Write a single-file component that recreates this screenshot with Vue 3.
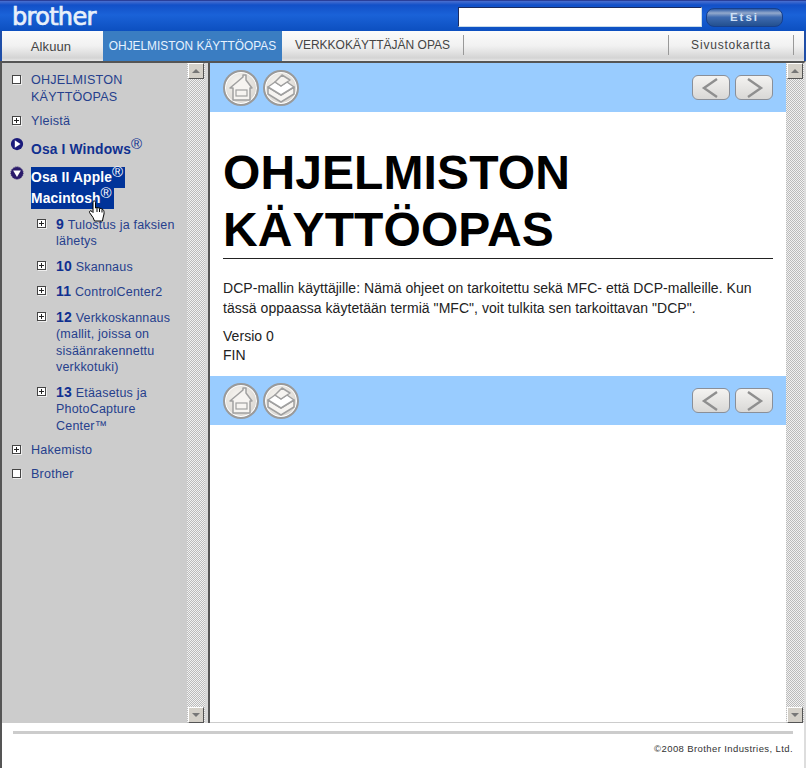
<template>
  <div class="page">
    <header class="topbar">
      <span class="logo">brother</span>
      <div class="search">
        <input class="search-input" type="text" />
        <button class="search-btn">Etsi</button>
      </div>
    </header>

    <nav class="tabs">
      <a class="tab tab-home">Alkuun</a>
      <a class="tab tab-active">OHJELMISTON KÄYTTÖOPAS</a>
      <a class="tab tab-net">VERKKOKÄYTTÄJÄN OPAS</a>
      <span class="tab-fill"></span>
      <a class="tab tab-map">Sivustokartta</a>
      <span class="tab-end"></span>
    </nav>

    <main class="main">
      <aside class="side">
        <ul class="tree">
          <li v-for="item in tree" :key="item.label" class="row" :class="item.cls">
            <span class="marker">
              <span v-if="item.icon === 'box'" class="box"></span>
              <span v-else-if="item.icon === 'plus'" class="box plus"></span>
              <svg v-else-if="item.icon === 'right'" width="16" height="16" viewBox="0 0 16 16">
                <circle cx="8" cy="8" r="7" fill="#1a1a7a" />
                <path d="M5.5 3.8 L12 8 L5.5 12.2 Z" fill="#fff" />
              </svg>
              <svg v-else width="16" height="16" viewBox="0 0 16 16">
                <circle cx="8" cy="8" r="7" fill="#2a1a6a" stroke="#2a1a6a" stroke-dasharray="1.5 1" />
                <path d="M3.6 5 L12.4 5 L8 12.5 Z" fill="#fff" />
              </svg>
            </span>
            <span class="label">
              <template v-if="item.num"><b class="num">{{ item.num }}</b>&nbsp;</template>
              <template v-if="item.selected">
                <span class="sel">Osa II Apple<sup>®</sup></span><br />
                <span class="sel">Macintosh<sup>®</sup></span>
              </template>
              <template v-else>
                <span v-html="item.label"></span>
              </template>
            </span>
          </li>
        </ul>
        <svg class="hand" width="18" height="22" viewBox="0 0 18 22">
          <path d="M5 1.5 C6 .5 7.5 1 7.5 2.5 L7.5 8 L9 7.5 L11 8 L13 8.5 L15 9.5 C16 10.5 16.2 12 16 14 L15 18 L14.5 21 L6.5 21 L5 17.5 L1.5 12.5 C1 11 2.5 10 4 11.5 L5 12.5 Z" fill="#fff" stroke="#000" stroke-width="1" />
          <path d="M9 8 V12 M11.5 8.5 V12 M14 9.5 V12.5" stroke="#000" stroke-width="1" fill="none" />
        </svg>
      </aside>

      <div class="scroll">
        <span class="arrow"><i class="up"></i></span>
        <span class="track"></span>
        <span class="arrow"><i class="down"></i></span>
      </div>

      <div class="split"></div>

      <section class="content">
        <div v-for="pos in ['top', 'bottom']" :key="pos" class="toolbar" :class="pos">
          <div class="round-btns">
            <span class="round">
              <svg width="32" height="32" viewBox="0 0 32 32">
                <path d="M5 16 L18 5 L18 3 L21 3 L21 8 L27 16 L25 16 L25 28 L8 28 L8 16 Z" fill="#f6f4f1" stroke="#a0a0a0" stroke-width="1.5" stroke-linejoin="round" />
                <rect x="11" y="18" width="11" height="6" fill="none" stroke="#a0a0a0" stroke-width="1.2" />
              </svg>
            </span>
            <span class="round">
              <svg width="32" height="32" viewBox="0 0 32 32">
                <path d="M3 15 L16 23 L29 15 L29 22 L16 30 L3 22 Z" fill="#f6f4f1" stroke="#a0a0a0" stroke-width="1.5" stroke-linejoin="round" />
                <path d="M3 15 L10 10 L16 14 L22 10 L29 15 L16 23 Z" fill="#fff" stroke="#a0a0a0" stroke-width="1.5" stroke-linejoin="round" />
                <path d="M10 10 L17 3 L25 8 L22 10 L16 14 Z" fill="#f6f4f1" stroke="#a0a0a0" stroke-width="1.5" stroke-linejoin="round" />
              </svg>
            </span>
          </div>
          <div class="page-btns">
            <span class="square">
              <svg width="22" height="20" viewBox="0 0 22 20"><path d="M17 1 L4 10 L17 19" fill="none" stroke="#8f8f8f" stroke-width="2.4" /></svg>
            </span>
            <span class="square">
              <svg width="22" height="20" viewBox="0 0 22 20"><path d="M5 1 L18 10 L5 19" fill="none" stroke="#8f8f8f" stroke-width="2.4" /></svg>
            </span>
          </div>
        </div>

        <article class="doc">
          <h1 class="title">OHJELMISTON KÄYTTÖOPAS</h1>
          <p class="intro">DCP-mallin käyttäjille: Nämä ohjeet on tarkoitettu sekä MFC- että DCP-malleille. Kun tässä oppaassa käytetään termiä "MFC", voit tulkita sen tarkoittavan "DCP".</p>
          <p class="version">Versio 0<br />FIN</p>
        </article>
      </section>

      <div class="scroll">
        <span class="arrow"><i class="up"></i></span>
        <span class="track"></span>
        <span class="arrow"><i class="down"></i></span>
      </div>
    </main>

    <footer class="foot">
      <div class="foot-rule"></div>
      <p class="copy">©2008 Brother Industries, Ltd.</p>
    </footer>
  </div>
</template>

<script setup>
const tree = [
  { label: 'OHJELMISTON<br>KÄYTTÖOPAS', icon: 'box', cls: 'r-first' },
  { label: 'Yleistä', icon: 'plus', cls: 'r-yleista' },
  { label: 'Osa I Windows<sup>®</sup>', icon: 'right', cls: 'r-bold' },
  { label: 'Osa II Apple', icon: 'down', cls: 'r-selected', selected: true },
  { label: 'Tulostus ja faksien lähetys', num: 9, icon: 'plus', cls: 'r-sub' },
  { label: 'Skannaus', num: 10, icon: 'plus', cls: 'r-sub' },
  { label: 'ControlCenter2', num: 11, icon: 'plus', cls: 'r-sub' },
  { label: 'Verkkoskannaus (mallit, joissa on sisäänrakennettu verkkotuki)', num: 12, icon: 'plus', cls: 'r-sub' },
  { label: 'Etäasetus ja PhotoCapture Center™', num: 13, icon: 'plus', cls: 'r-sub' },
  { label: 'Hakemisto', icon: 'plus', cls: 'r-top' },
  { label: 'Brother', icon: 'box', cls: 'r-top' },
]
</script>

<style>
html, body { margin: 0; background: #fff; overflow: hidden; }
</style>

<style scoped>
.page {
  width: 806px;
  height: 768px;
  display: flex;
  flex-direction: column;
  font-family: "Liberation Sans", Arial, sans-serif;
  position: relative;
  overflow: hidden;
}

.topbar {
  height: 31px;
  box-sizing: border-box;
  display: flex;
  align-items: center;
  justify-content: space-between;
  padding: 2px 23px 0 12px;
  border-top: 1px solid #2a3f9a;
  background: linear-gradient(to bottom, #4a6fd0 0, #1250c8 4px, #1a62d8 14px, #0c4fc0 100%);
}
.logo {
  color: #e8f0fa;
  font-family: "DejaVu Sans", sans-serif;
  font-size: 24px;
  letter-spacing: -.7px;
  -webkit-text-stroke: .7px #e8f0fa;
  line-height: 28px;
  margin-top: 0;
}
.search { display: flex; align-items: center; gap: 4px; }
.search-input {
  width: 244px;
  height: 20px;
  box-sizing: border-box;
  border: 1px solid #c8dcea;
  border-top-color: #1c2c60;
  border-left-color: #1c2c60;
  background: #fff;
  padding: 0;
  margin: 0;
}
.search-btn {
  width: 77px;
  height: 19px;
  border: 1px solid #17408c;
  border-radius: 8px;
  background: linear-gradient(to bottom, #2c5aa6 0, #93a9cc 24%, #3f6bb0 48%, #23508f 100%);
  color: #cfe0f5;
  font: bold 11.5px "Liberation Sans", Arial, sans-serif;
  letter-spacing: 2px;
  padding: 0;
}

.tabs {
  height: 30px;
  box-sizing: border-box;
  display: flex;
  align-items: stretch;
  padding-left: 1px;
  border-left: 2px solid #1f4ea8;
  border-right: 2px solid #1f4ea8;
  background: linear-gradient(to bottom, #fbfbfb 0, #f1f1f1 50%, #d4d4d4 90%, #e8e8e8 100%);
  font-size: 12px;
  color: #444;
}
.tab {
  display: flex;
  align-items: center;
  justify-content: center;
  white-space: nowrap;
}
.tab-home { width: 96px; font-size: 13px; letter-spacing: .1px; }
.tab-active { width: 179px; background: #3a7dc2; color: #e6f2ff; margin-left: 4px; font-size: 11.9px; }
.tab-net {
  width: 181px;
  margin: 4px 0 6px;
  border-right: 1px solid #999;
}
.tab-fill { width: 204px; margin: 4px 0 6px; border-right: 1px solid #999; }
.tab-map {
  width: 124px;
  margin: 4px 0 6px;
  border-right: 1px solid #999;
  letter-spacing: .8px;
}
.tab-end { flex: 1; }

.main {
  flex: 1;
  min-height: 0;
  display: flex;
  border-top: 2px solid #555;
  border-left: 2px solid #555;
  border-right: 2px solid #ddd;
}

.side {
  width: 185px;
  background: #ccc;
  flex: none;
  box-sizing: border-box;
  padding: 9px 0 0 8px;
  position: relative;
}
.tree {
  list-style: none;
  margin: 0;
  padding: 0;
  font-size: 12.6px;
  line-height: 16.5px;
  color: #26408c;
  letter-spacing: .2px;
}
.row { display: flex; margin-bottom: 8px; }
.marker {
  width: 21px;
  flex: none;
  display: flex;
  justify-content: center;
  padding-top: 2px;
  box-sizing: border-box;
  height: 16px;
  margin-left: -7px;
  margin-right: 7px;
  padding-left: 8px;
  padding-right: 2px;
}
.box {
  width: 7px;
  height: 7px;
  border: 1px solid #444;
  background: #fff;
  box-shadow: 1px 1px 0 #eee;
  display: block;
  margin-top: 1px;
  flex: none;
}
.plus {
  background:
    linear-gradient(#222, #222) center / 5px 1px no-repeat,
    linear-gradient(#222, #222) center / 1px 5px no-repeat,
    #fff;
}
.r-bold .label, .r-selected .label {
  font-weight: bold;
  font-size: 13.8px;
  color: #103090;
  letter-spacing: .15px;
}
.r-bold { margin-top: 10px; line-height: 20px; margin-bottom: 6px; }
.r-selected { line-height: 21px; margin-bottom: 7px; margin-top: 7px; }
.r-bold .marker, .r-selected .marker {
  margin-left: -7px;
  padding-left: 7px;
  padding-right: 0;
  margin-right: 7px;
  padding-top: 0;
  margin-top: -2px;
}
.r-bold .marker { margin-top: -4px; }
.label :deep(sup), .sel sup { font-size: 15px; font-weight: normal; line-height: 0; vertical-align: 5px; }
.sel { background: #003399; color: #fff; display: inline-block; padding-right: 2px; }
.r-sub { padding-left: 25px; width: 143px; }
.r-sub .label { font-size: 12.5px; }
.r-top { margin-bottom: 7px; }
.num { font-size: 14px; color: #103090; }
.hand { position: absolute; left: 86px; top: 137px; }

.scroll {
  width: 18px;
  flex: none;
  display: flex;
  flex-direction: column;
  background: repeating-conic-gradient(#bbb 0 25%, #f2f2f2 0 50%) 0 0 / 2px 2px;
}
.arrow {
  height: 16px;
  width: 16px;
  flex: none;
  box-sizing: border-box;
  background: #d4d0c8;
  border: 1px solid;
  border-color: #fff #555 #555 #fff;
  display: flex;
  align-items: center;
  justify-content: center;
  margin-left: 1px;
}
.track { flex: 1; }
.up, .down { width: 0; height: 0; border-left: 4px solid transparent; border-right: 4px solid transparent; }
.up { border-bottom: 4px solid #777; }
.down { border-top: 4px solid #777; }

.split {
  width: 3px;
  flex: none;
  background: #d8d8d8;
  border-right: 2px solid #555;
}

.content {
  flex: 1;
  min-width: 0;
  position: relative;
  background: #fff;
  display: flex;
  flex-direction: column;
  border-bottom: 1px solid #ccc;
}
.toolbar {
  height: 49px;
  background: #99ccff;
  display: flex;
  align-items: center;
  justify-content: space-between;
  padding: 0 13px 0 13px;
  box-sizing: border-box;
}
.toolbar.top { order: 0; }
.doc { order: 1; padding: 32px 14px 0 13px; color: #111; }
.toolbar.bottom { order: 2; margin-top: 11px; }
.round-btns { display: flex; gap: 4px; }
.round {
  width: 36px;
  height: 36px;
  box-sizing: border-box;
  border-radius: 50%;
  border: 2px solid #9a9a9a;
  box-shadow: inset 0 0 0 1px #fff;
  background: radial-gradient(circle at 40% 35%, #f8f6f2 0, #dcd9d4 70%, #bdbab5 100%);
  display: flex;
  align-items: center;
  justify-content: center;
}
.page-btns { display: flex; gap: 5px; }
.square {
  width: 38px;
  height: 25px;
  box-sizing: border-box;
  border: 1px solid #8a8f98;
  border-radius: 6px;
  background: linear-gradient(to bottom, #f4f3f1, #d9d8d6);
  display: flex;
  align-items: center;
  justify-content: center;
}
.title {
  margin: 0;
  width: 550px;
  font-size: 48px;
  line-height: 57px;
  font-weight: bold;
  color: #000;
  border-bottom: 1px solid #222;
  letter-spacing: .1px;
}
.intro, .version {
  margin: 0;
  font-size: 14px;
  line-height: 20px;
  color: #222;
  width: 552px;
  letter-spacing: .04px;
}
.intro { margin-top: 19px; }
.version { margin-top: 9px; line-height: 19px; }

.foot {
  height: 45px;
  box-sizing: border-box;
  flex: none;
  border-left: 2px solid #555;
  border-right: 2px solid #ddd;
  padding: 8px 11px 0 11px;
}
.foot-rule { height: 3px; background: #ccc; }
.copy {
  margin: 9px 0 0;
  text-align: right;
  font-size: 9.5px;
  letter-spacing: .4px;
  color: #333;
}
</style>
